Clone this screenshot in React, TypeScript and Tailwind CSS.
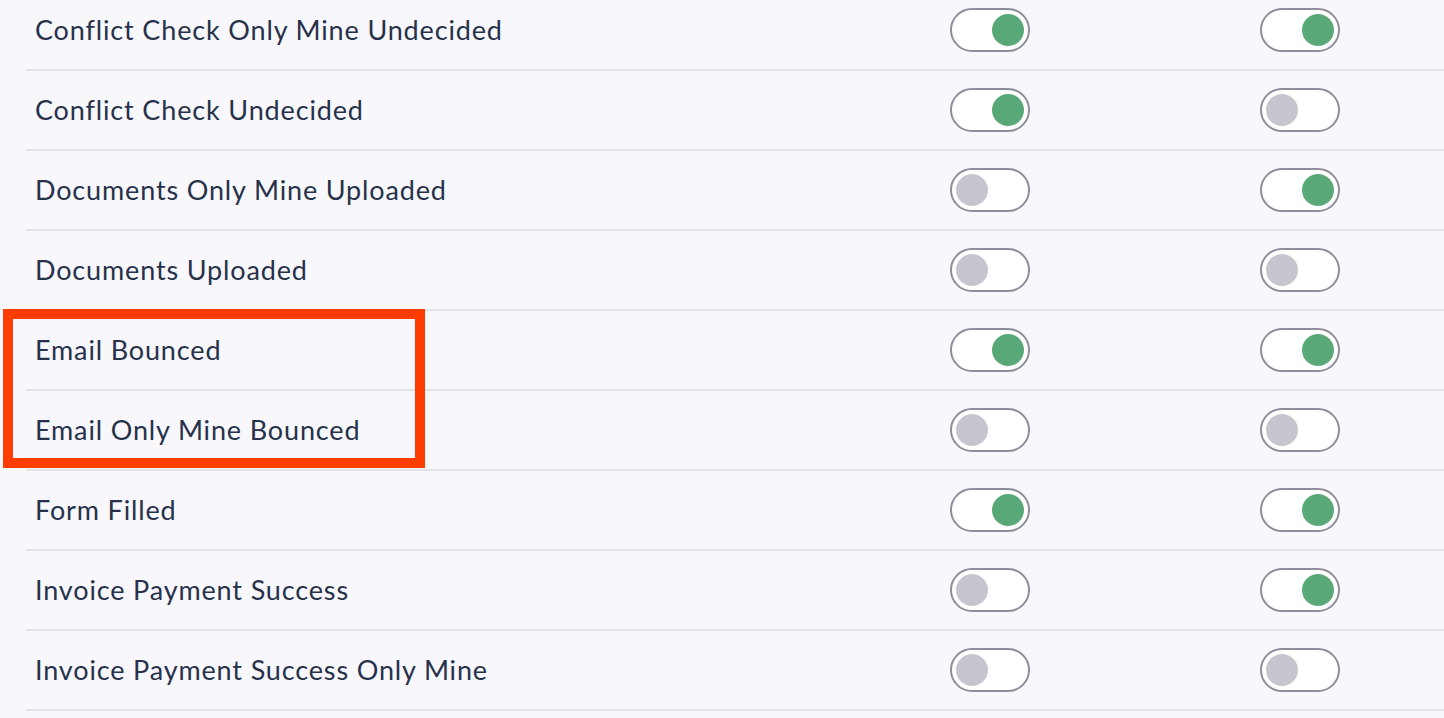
import React from 'react';

type Row = { label: string; a: boolean; b: boolean };

const ROWS: Row[] = [
  { label: 'Conflict Check Only Mine Undecided', a: true, b: true },
  { label: 'Conflict Check Undecided', a: true, b: false },
  { label: 'Documents Only Mine Uploaded', a: false, b: true },
  { label: 'Documents Uploaded', a: false, b: false },
  { label: 'Email Bounced', a: true, b: true },
  { label: 'Email Only Mine Bounced', a: false, b: false },
  { label: 'Form Filled', a: true, b: true },
  { label: 'Invoice Payment Success', a: false, b: true },
  { label: 'Invoice Payment Success Only Mine', a: false, b: false },
];

const Toggle: React.FC<{ on: boolean }> = ({ on }) => (
  <div
    className={`w-[80px] h-[44px] rounded-full border-2 border-[#8f8d9b] bg-white flex items-center px-[4px] ${
      on ? 'justify-end' : 'justify-start'
    }`}
  >
    <div className={`w-[32px] h-[32px] rounded-full ${on ? 'bg-[#59a877]' : 'bg-[#c6c5cd]'}`} />
  </div>
);

export default function App() {
  return (
    <div
      className="relative w-[1444px] h-[718px] overflow-hidden bg-[#f7f7fc] text-[#27324a]"
      style={{ fontFamily: 'Lato, "Open Sans", sans-serif' }}
    >
      <div className="ml-[26px] -mt-[9px]">
        {ROWS.map((row) => (
          <div key={row.label} className="flex items-center h-[80px] border-b-2 border-[#e3e3ea]">
            <div className="w-[924px] pl-[9px] text-[27px] tracking-[0.85px]">{row.label}</div>
            <Toggle on={row.a} />
            <div className="ml-[230px]">
              <Toggle on={row.b} />
            </div>
          </div>
        ))}
      </div>
      {/* highlight box */}
      <div className="absolute left-[3px] top-[309px] w-[422px] h-[159px] border-[10px] border-[#ff3d00]" />
    </div>
  );
}
